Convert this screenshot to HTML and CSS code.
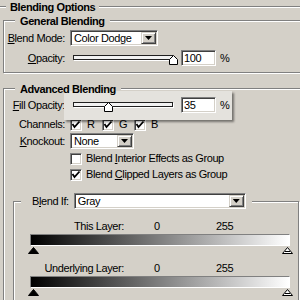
FILE: index.html
```html
<!DOCTYPE html>
<html lang="en">
<head>
  <meta charset="UTF-8">
  <meta name="viewport" content="width=device-width, initial-scale=1.0">
  <title>Blending Options</title>
  <link rel="stylesheet" href="styles.css">
</head>
<body>

  <fieldset class="group outer">
    <legend>Blending Options</legend>

    <!-- General Blending -->
    <fieldset class="group general">
      <legend>General Blending</legend>
      <div class="row row-mode">
        <span class="label"><u>B</u>lend Mode:</span>
        <div class="select mode-select"><span class="value">Color Dodge</span><span class="drop"></span></div>
      </div>
      <div class="row row-opacity">
        <span class="label"><u>O</u>pacity:</span>
        <div class="amount">
          <div class="slider">
            <div class="track"></div>
            <svg class="thumb" style="left: 96px" width="9" height="10" viewBox="0 0 9 10"><polygon points="4.5,0.5 8.5,4.5 8.5,9.5 0.5,9.5 0.5,4.5" fill="#fff" stroke="#000"/></svg>
          </div>
          <div class="field">100</div>
          <span class="pct">%</span>
        </div>
      </div>
    </fieldset>

    <!-- Advanced Blending -->
    <fieldset class="group advanced">
      <legend>Advanced Blending</legend>
      <div class="row row-fill">
        <span class="label"><u>F</u>ill Opacity:</span>
        <div class="amount popup">
          <div class="slider">
            <div class="track"></div>
            <svg class="thumb" style="left: 31px" width="9" height="10" viewBox="0 0 9 10"><polygon points="4.5,0.5 8.5,4.5 8.5,9.5 0.5,9.5 0.5,4.5" fill="#fff" stroke="#000"/></svg>
          </div>
          <div class="field">35</div>
          <span class="pct">%</span>
        </div>
      </div>
      <div class="row row-channels">
        <span class="label">Channels:</span>
        <div class="channels">
          <span class="chan"><span class="check"><svg width="10" height="10" viewBox="0 0 10 10"><polyline points="1.5,4 3.5,7 8.5,1.5" fill="none" stroke="#000" stroke-width="1.8"/></svg></span>R</span>
          <span class="chan"><span class="check"><svg width="10" height="10" viewBox="0 0 10 10"><polyline points="1.5,4 3.5,7 8.5,1.5" fill="none" stroke="#000" stroke-width="1.8"/></svg></span>G</span>
          <span class="chan"><span class="check"><svg width="10" height="10" viewBox="0 0 10 10"><polyline points="1.5,4 3.5,7 8.5,1.5" fill="none" stroke="#000" stroke-width="1.8"/></svg></span>B</span>
        </div>
      </div>
      <div class="row row-knockout">
        <span class="label"><u>K</u>nockout:</span>
        <div class="select knock-select"><span class="value">None</span><span class="drop"></span></div>
      </div>
      <div class="row row-opt">
        <span></span>
        <span class="option"><span class="check"></span><span>Blend <u>I</u>nterior Effects as Group</span></span>
      </div>
      <div class="row row-opt">
        <span></span>
        <span class="option"><span class="check"><svg width="10" height="10" viewBox="0 0 10 10"><polyline points="1.5,4 3.5,7 8.5,1.5" fill="none" stroke="#000" stroke-width="1.8"/></svg></span><span>Blend <u>C</u>lipped Layers as Group</span></span>
      </div>

      <!-- Blend If -->
      <fieldset class="group blendif">
        <legend>
          <div class="blendif-head">
            <span>B<u>l</u>end If:</span>
            <div class="select gray-select"><span class="value">Gray</span><span class="drop"></span></div>
          </div>
        </legend>

        <div class="layer-head">
          <span class="name">This Layer:</span>
          <span class="lo">0</span>
          <span>255</span>
        </div>
        <div class="bar"></div>
        <div class="marks">
          <svg width="11" height="7" viewBox="0 0 11 7"><polygon points="5.5,0.5 10.5,6.5 0.5,6.5" fill="#000" stroke="#000"/></svg>
          <svg width="11" height="7" viewBox="0 0 11 7"><polygon points="5.5,0.5 10.5,6.5 0.5,6.5" fill="#fff" stroke="#000"/><line x1="3" y1="4.5" x2="8" y2="4.5" stroke="#000"/></svg>
        </div>

        <div class="layer-head second">
          <span class="name">Underlying Layer:</span>
          <span class="lo">0</span>
          <span>255</span>
        </div>
        <div class="bar"></div>
        <div class="marks">
          <svg width="11" height="7" viewBox="0 0 11 7"><polygon points="5.5,0.5 10.5,6.5 0.5,6.5" fill="#000" stroke="#000"/></svg>
          <svg width="11" height="7" viewBox="0 0 11 7"><polygon points="5.5,0.5 10.5,6.5 0.5,6.5" fill="#fff" stroke="#000"/><line x1="3" y1="4.5" x2="8" y2="4.5" stroke="#000"/></svg>
        </div>
      </fieldset>
    </fieldset>
  </fieldset>

</body>
</html>
```

FILE: styles.css
```css
/* Dialog base */
body {
  margin: 0;
  width: 300px;
  height: 300px;
  overflow: hidden;
  background-color: #d4d0c8;
  font-family: "Liberation Sans", Arial, sans-serif;
  font-size: 11px;
  line-height: 13px;
  letter-spacing: -0.4px;
  color: #000;
}

/* Group boxes */
.group {
  margin: 0;
  padding: 0;
  min-width: 0;
  box-sizing: border-box;
  border: 1px solid #808080;
  box-shadow: inset 1px 1px 0 #fff, 1px 1px 0 #fff;
}
.group > legend {
  position: relative;
  z-index: 2;
  padding: 2px 4px 0;
  /* only hide the groove behind the title, not the popup below it */
  background: linear-gradient(#d4d0c8, #d4d0c8) top / 100% 10px no-repeat;
  font-weight: bold;
}
.outer {
  margin: -1px 0 0 -10px;
  padding-left: 12px;
  width: 350px;
}
.outer > legend {
  margin-left: 3px;
}
.general,
.advanced {
  width: 330px;
}
.general > legend,
.advanced > legend {
  margin-left: 11px;
  padding: 2px 5px 0;
}
.general {
  margin-top: -1px;
  padding-bottom: 6px;
}
.advanced {
  margin-top: 8px;
}

/* Label / control rows */
.row {
  display: grid;
  grid-template-columns: 61px auto;
  column-gap: 5px;
  align-items: center;
  justify-items: start;
}
.row > .label {
  justify-self: end;
}
.row-mode { margin-top: 2px; }
.row-opacity { margin-top: 4px; }
.row-fill { margin-top: 1px; }
.row-channels { margin-top: 5px; }
.row-knockout { margin-top: 2px; }
.row-opt { margin-top: 3px; }

/* Sunken controls */
.select,
.field {
  box-sizing: border-box;
  height: 16px;
  padding: 1px;
  border: 1px solid;
  border-color: #808080 #fff #fff #808080;
  box-shadow: inset 1px 1px 0 #404040, inset -1px -1px 0 #d4d0c8;
  background-color: #fff;
  line-height: 12px;
}
.select {
  display: flex;
}
.select .value {
  flex: 1;
  padding-left: 2px;
}
.drop {
  box-sizing: border-box;
  width: 15px;
  display: flex;
  align-items: center;
  justify-content: center;
  background-color: #d4d0c8;
  border: 1px solid;
  border-color: #d4d0c8 #404040 #404040 #d4d0c8;
  box-shadow: inset 1px 1px 0 #fff, inset -1px -1px 0 #808080;
}
.drop::after {
  content: "";
  width: 7px;
  height: 4px;
  background-color: #000;
  clip-path: polygon(0 0, 100% 0, 50% 100%);
}
.mode-select { width: 88px; }
.knock-select { width: 64px; }
.gray-select { width: 172px; }

.field {
  width: 35px;
  padding-left: 2px;
}

/* Sliders */
.amount {
  display: flex;
  align-items: center;
}
.slider {
  position: relative;
  width: 100px;
  height: 16px;
  margin: 0 8px 0 3px;
}
.track {
  box-sizing: border-box;
  height: 5px;
  margin-top: 5px;
  border: 1px solid #202020;
  background-color: #f2f2f2;
  box-shadow: 1px 1px 0 #fff;
}
.thumb {
  position: absolute;
  top: 5px;
}
.pct {
  margin-left: 4px;
}
.popup {
  position: relative;
  z-index: 1;
  margin: -6px 0 -7px -6px;
  padding: 6px 3px 7px 6px;
  background-color: #e4e2dd;
  box-shadow: 2px 2px 2px rgba(0, 0, 0, 0.45);
}

/* Checkboxes */
.check {
  box-sizing: border-box;
  width: 12px;
  height: 12px;
  display: flex;
  align-items: center;
  justify-content: center;
  border: 1px solid;
  border-color: #808080 #fff #fff #808080;
  box-shadow: inset 1px 1px 0 #404040, inset -1px -1px 0 #d4d0c8;
  background-color: #fff;
}
.channels {
  display: flex;
}
.chan {
  width: 32px;
  display: flex;
  align-items: center;
  gap: 5px;
}
.option {
  display: flex;
  align-items: center;
  gap: 4px;
}

/* Blend If */
.blendif {
  margin: 12px 0 0 9px;
  width: 286px;
  padding-bottom: 20px;
}
.blendif > legend {
  margin-left: 7px;
  padding: 0 6px 0 11px;
  background: #d4d0c8;
  font-weight: normal;
}
.blendif-head {
  display: flex;
  align-items: center;
  gap: 5px;
}
.layer-head {
  display: flex;
  margin: 11px 0 1px;
}
.layer-head.second {
  margin-top: 8px;
}
.layer-head .name {
  width: 110px;
  text-align: right;
}
.layer-head .lo {
  width: 62px;
  margin-left: 30px;
}
.bar {
  box-sizing: border-box;
  width: 260px;
  height: 12px;
  margin-left: 16px;
  border: 1px solid;
  border-color: #808080 #fff #fff #808080;
  background: linear-gradient(to right, #000, #fff);
}
.marks {
  display: flex;
  justify-content: space-between;
  width: 265px;
  margin: 1px 0 0 14px;
}
.marks svg {
  display: block;
}
```
